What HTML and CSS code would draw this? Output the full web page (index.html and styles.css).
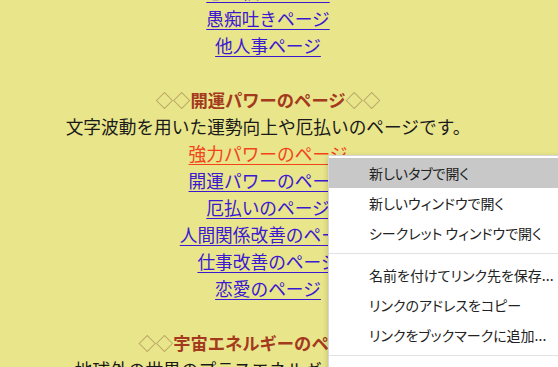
FILE: index.html
```html
<!DOCTYPE html>
<html lang="ja">
<head>
<meta charset="utf-8">
<link rel="stylesheet" href="styles.css">
</head>
<body>
<div class="page">
  <div class="row"><a class="link" href="#">心の悩みページ</a></div>
  <div class="row"><a class="link" href="#">愚痴吐きページ</a></div>
  <div class="row"><a class="link" href="#">他人事ページ</a></div>
  <div class="row blank"></div>
  <div class="row heading"><span class="dia">◇◇</span>開運パワーのページ<span class="dia">◇◇</span></div>
  <div class="row desc">文字波動を用いた運勢向上や厄払いのページです。</div>
  <div class="row"><a class="link active" href="#">強力パワーのページ</a></div>
  <div class="row"><a class="link" href="#">開運パワーのページ</a></div>
  <div class="row"><a class="link" href="#">厄払いのページ</a></div>
  <div class="row"><a class="link" href="#">人間関係改善のページ</a></div>
  <div class="row"><a class="link" href="#">仕事改善のページ</a></div>
  <div class="row"><a class="link" href="#">恋愛のページ</a></div>
  <div class="row blank"></div>
  <div class="row heading"><span class="dia">◇◇</span>宇宙エネルギーのページ<span class="dia">◇◇</span></div>
  <div class="row desc">地球外の世界のプラスエネルギーのページです。</div>
</div>
<div class="menu">
  <div class="item hover">新しいタブで開く</div>
  <div class="item">新しいウィンドウで開く</div>
  <div class="item">シークレット ウィンドウで開く</div>
  <div class="sep"></div>
  <div class="item">名前を付けてリンク先を保存...</div>
  <div class="item">リンクのアドレスをコピー</div>
  <div class="item">リンクをブックマークに追加...</div>
  <div class="sep"></div>
  <div class="item">検証</div>
</div>
</body>
</html>
```

FILE: styles.css
```css
html, body {
  margin: 0;
  padding: 0;
  overflow: hidden;
  width: 558px;
  height: 367px;
  background: #e9e58a;
}
body {
  position: relative;
  font-family: "Noto Sans CJK JP", "Noto Sans", sans-serif;
}
.page {
  margin-top: -22px;
  width: 536px;
  display: flex;
  flex-direction: column;
  align-items: center;
  font-size: 17.7px;
  color: #111;
}
.row {
  height: 27px;
  line-height: 27px;
  white-space: nowrap;
  text-align: center;
}
.link {
  color: #3b18d2;
  text-decoration: underline;
  text-underline-offset: 3px;
}
.link.active {
  color: #f2431b;
}
.heading {
  font-weight: bold;
  font-size: 17.3px;
  color: #a33a1e;
}
.dia {
  color: #ab9658;
  font-weight: normal;
}
.desc {
  color: #1a1a1a;
}
.menu {
  position: absolute;
  left: 328px;
  top: 155px;
  width: 250px;
  background: #fff;
  border: 1px solid #d6d6d6;
  padding-top: 2px;
  box-shadow: 0 2px 6px rgba(0,0,0,0.2);
  font-size: 14px;
  color: #222;
  font-feature-settings: "palt";
}
.item {
  height: 30px;
  line-height: 30px;
  padding-left: 40px;
  white-space: nowrap;
}
.item.hover {
  background: #c8c8c8;
}
.sep {
  height: 1px;
  background: #e2e2e2;
  margin: 5px 0 6px;
}
```
